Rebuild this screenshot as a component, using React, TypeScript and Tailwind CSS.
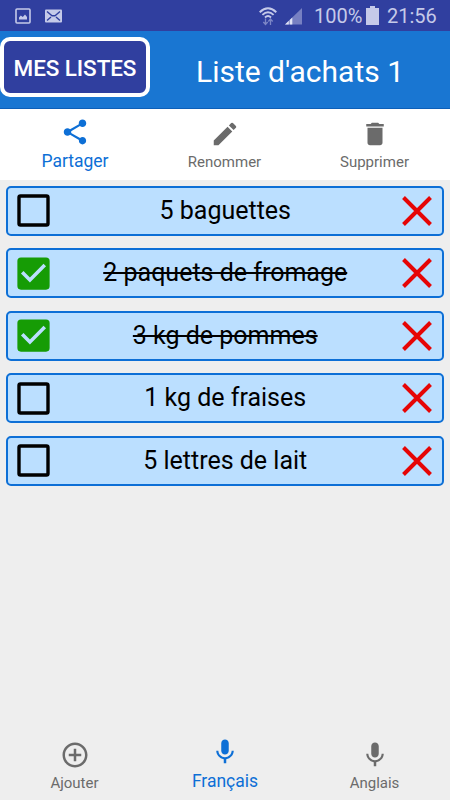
import React, { useState } from "react";
import {
  MdAddCircleOutline,
  MdCheckBox,
  MdDelete,
  MdEdit,
  MdShare,
} from "react-icons/md";

interface ListItem {
  id: number;
  label: string;
  done: boolean;
}

interface NavButtonProps {
  label: string;
  icon: React.ReactNode;
  active?: boolean;
}

const initialItems: ListItem[] = [
  { id: 1, label: "5 baguettes", done: false },
  { id: 2, label: "2 paquets de fromage", done: true },
  { id: 3, label: "3 kg de pommes", done: true },
  { id: 4, label: "1 kg de fraises", done: false },
  { id: 5, label: "5 lettres de lait", done: false },
];

const MicIcon = () => (
  <svg width="30" height="30" viewBox="0 0 24 24" fill="currentColor">
    <path d="M12 14c1.66 0 2.99-1.34 2.99-3L15 5c0-1.66-1.34-3-3-3S9 3.34 9 5v6c0 1.66 1.34 3 3 3zm5.3-3c0 3-2.54 5.1-5.3 5.1S6.7 14 6.7 11H5c0 3.41 2.72 6.23 6 6.72V21h2v-3.28c3.28-.48 6-3.3 6-6.72h-1.7z" />
  </svg>
);

const StatusBar = () => (
  <div className="flex h-[31px] items-center bg-[#303f9f] text-[#c5cae9]">
    <svg className="ml-[15px]" width="17" height="18" viewBox="0 0 17 18">
      <rect x="1" y="2" width="14" height="14" rx="1" fill="none" stroke="currentColor" strokeWidth="1.6" />
      <path d="M4 12.500V10.500l1.800-2 2 1.500 2.200-2.500 2 2.500v2.500z" fill="currentColor" />
    </svg>
    <svg className="ml-[13px]" width="17" height="18" viewBox="0 0 17 18">
      <rect x="0" y="2.500" width="17" height="13" rx="1" fill="currentColor" />
      <path d="M2 4.500l5 4.200h3l5-4.200M2 13.500l4-3.500M15 13.500l-4-3.500" fill="none" stroke="#303f9f" strokeWidth="1.4" />
    </svg>
    <svg className="ml-[197px]" width="18" height="20" viewBox="0 0 18 20">
      <g fill="none" stroke="currentColor" strokeWidth="1.9">
        <path d="M.7 6.200Q9-1.600 17.300 6.200" />
        <path d="M3.400 8.900Q9 3.400 14.600 8.900" />
        <path d="M6 11.500Q9 8.600 12 11.500" />
      </g>
      <path d="M6.500 12.500v6M4.300 16l2.200 2.500 2.200-2.500M11.500 19v-6M9.300 15.500l2.200-2.500 2.200 2.500" fill="none" stroke="#7d86c6" strokeWidth="1.300" />
    </svg>
    <svg className="ml-[8px]" width="18" height="18" viewBox="0 0 18 18">
      <path d="M0 17.500L17 1v16.500z" fill="#7780c2" />
      <path d="M0 17.500l3.800-3.700v3.700zM4.700 17.500v-4.600l2.600-2.500v7.100z" fill="#e0e3f5" />
    </svg>
    <span className="mt-[1px] ml-[11px] w-[49px] text-[20px] leading-[31px] whitespace-nowrap">100%</span>
    <svg className="ml-[3px]" width="13" height="20" viewBox="0 0 13 20">
      <path d="M4 0h5v2h4v17H0V2h4z" fill="currentColor" />
    </svg>
    <span className="mt-[1px] ml-[8px] text-[20px] leading-[31px]">21:56</span>
  </div>
);

const NavButton = ({ label, icon, active }: NavButtonProps) => (
  <button
    className={`flex flex-1 flex-col items-center ${
      active ? "text-[#0d6fd6]" : "mt-[2.5px] text-[#6b6b6b]"
    }`}
  >
    {icon}
    <span
      className={
        active
          ? "mt-[4px] text-[17.5px] leading-[21px]"
          : "mt-[4px] pr-[1px] text-[15px] leading-[18px]"
      }
    >
      {label}
    </span>
  </button>
);

const App = () => {
  const [items, setItems] = useState<ListItem[]>(initialItems);

  const toggleItem = (id: number) => {
    setItems(items.map((item) => (item.id === id ? { ...item, done: !item.done } : item)));
  };

  const removeItem = (id: number) => {
    setItems(items.filter((item) => item.id !== id));
  };

  return (
    <div className="flex h-[800px] w-[450px] flex-col overflow-hidden bg-[#eeeeee] font-[Roboto,sans-serif]">
      <StatusBar />

      {/* header */}
      <div className="flex h-[78px] shrink-0 border-b border-[#0d5fb8] bg-[#1976d2] text-white">
        <button className="mt-[6px] h-[60px] w-[150px] shrink-0 rounded-[10px] border-4 border-white bg-[#303f9f] pt-[3px] text-[22.5px] font-medium tracking-[-0.1px] whitespace-nowrap">
          MES LISTES
        </button>
        <div className="flex-1 text-center text-[30px] leading-[82px]">Liste d'achats 1</div>
      </div>

      {/* actions */}
      <div className="flex h-[70.5px] shrink-0 bg-white pt-[7.5px]">
        <NavButton label="Partager" icon={<MdShare size={30} />} active />
        <NavButton label="Renommer" icon={<MdEdit size={30} />} />
        <NavButton label="Supprimer" icon={<MdDelete size={30} />} />
      </div>

      {/* items */}
      <div className="flex flex-1 flex-col gap-[12.5px] pt-[6.2px] pr-[6.5px] pl-[6.4px]">
        {items.map((item) => (
          <div
            key={item.id}
            className="flex h-[50px] items-center rounded-[5px] border-2 border-[#0d6fd6] bg-[#bbdfff]"
          >
            <button className="ml-[3.6px] h-[43px] w-[43px]" onClick={() => toggleItem(item.id)}>
              {item.done ? (
                <MdCheckBox size={43} className="text-[#169c05]" />
              ) : (
                <svg width="43" height="43" viewBox="0 0 43 43">
                  <rect x="7" y="7" width="29" height="29" rx="1.5" fill="none" stroke="#000" strokeWidth="3.4" />
                </svg>
              )}
            </button>
            <span
              className={`flex-1 pr-[5px] text-center text-[25px] leading-[46px] text-black ${
                item.done ? "line-through decoration-[1.5px]" : ""
              }`}
            >
              {item.label}
            </span>
            <button className="mr-[9px]" onClick={() => removeItem(item.id)}>
              <svg width="32" height="32" viewBox="0 0 32 32">
                <path d="M2.500 2.500l27 27M29.500 2.500l-27 27" stroke="#e60505" strokeWidth="4" />
              </svg>
            </button>
          </div>
        ))}
      </div>

      {/* bottom bar */}
      <div className="flex h-[63px] shrink-0">
        <NavButton label="Ajouter" icon={<MdAddCircleOutline size={30} />} />
        <NavButton label="Français" icon={<MicIcon />} active />
        <NavButton label="Anglais" icon={<MicIcon />} />
      </div>
    </div>
  );
};

export default App;
